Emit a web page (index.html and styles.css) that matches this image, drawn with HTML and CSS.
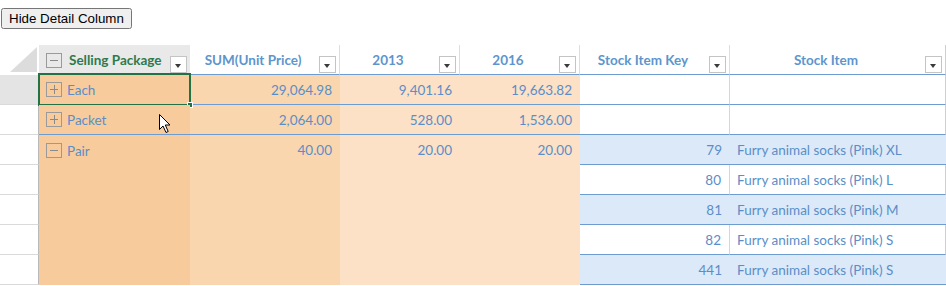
FILE: index.html
```html
<!DOCTYPE html>
<html>
<head>
<meta charset="utf-8">
<title>Pivot</title>
<link rel="stylesheet" href="styles.css">
</head>
<body>
<div class="toolbar"><button type="button" class="btn">Hide Detail Column</button></div>
<div class="pivot">
  <div class="corner"><svg class="tri" width="39" height="30" viewBox="0 0 39 30"><polygon points="10,27 37,2 37,27" fill="#dcdcdc"/></svg></div>
  <div class="hd hd-rows"><span class="tog minus"></span><span class="hd-label">Selling Package</span><span class="filter"></span></div>
  <div class="hd"><span class="hd-label">SUM(Unit Price)</span><span class="filter"></span></div>
  <div class="hd"><span class="hd-label">2013</span><span class="filter"></span></div>
  <div class="hd"><span class="hd-label">2016</span><span class="filter"></span></div>
  <div class="hd"><span class="hd-label">Stock Item Key</span><span class="filter"></span></div>
  <div class="hd hd-last"><span class="hd-label">Stock Item</span><span class="filter"></span></div>

  <div class="gut gut-sel"></div>
  <div class="c o1 lbl"><span class="tog plus"></span>Each<div class="selbox"><span class="handle"></span></div></div>
  <div class="c o2 num">29,064.98</div>
  <div class="c o3 num">9,401.16</div>
  <div class="c o3 num">19,663.82</div>
  <div class="c w num"></div>
  <div class="c w w-last"></div>

  <div class="gut"></div>
  <div class="c o1 lbl"><span class="tog plus"></span>Packet</div>
  <div class="c o2 num">2,064.00</div>
  <div class="c o3 num">528.00</div>
  <div class="c o3 num">1,536.00</div>
  <div class="c w num"></div>
  <div class="c w w-last"></div>

  <div class="gut"></div>
  <div class="c o1 lbl span5"><span class="tog minus"></span>Pair</div>
  <div class="c o2 num span5">40.00</div>
  <div class="c o3 num span5">20.00</div>
  <div class="c o3 num span5">20.00</div>
  <div class="c b num">79</div>
  <div class="c b txt">Furry animal socks (Pink) XL</div>

  <div class="gut"></div>
  <div class="c w num">80</div>
  <div class="c w w-last txt">Furry animal socks (Pink) L</div>

  <div class="gut"></div>
  <div class="c b num">81</div>
  <div class="c b txt">Furry animal socks (Pink) M</div>

  <div class="gut"></div>
  <div class="c w num">82</div>
  <div class="c w w-last txt">Furry animal socks (Pink) S</div>

  <div class="gut"></div>
  <div class="c b num">441</div>
  <div class="c b txt">Furry animal socks (Pink) S</div>

  <svg class="cursor" width="14" height="21" viewBox="0 0 14 21"><path d="M1.5 1.5 L1.5 16.5 L5 13 L8 19.5 L10.2 18.5 L7.3 12 L12 12 Z" fill="#ffffff" stroke="#000000" stroke-width="1" stroke-linejoin="miter"/></svg>
</div>
</body>
</html>
```

FILE: styles.css
```css
* { box-sizing: border-box; }
html, body { margin: 0; padding: 0; background: #ffffff; }
body { padding-top: 8px; font-family: "Lato", "Open Sans", sans-serif; }

.toolbar { display: flex; padding-left: 1px; height: 21px; }
.btn {
  font: 13.333px "Liberation Sans", Arial, sans-serif;
  height: 21px;
  padding: 1px 6px;
  color: #000;
}

.pivot {
  position: relative;
  margin-top: 16px;
  display: grid;
  grid-template-columns: 39px 151px 150px 120px 120px 150px 216px;
  grid-template-rows: repeat(8, 30px);
  font-size: 13.5px;
  color: #5b8ec8;
}

.corner { border-bottom: 1px solid #ffffff; }
.tri { display: block; }

.hd {
  display: flex;
  align-items: center;
  justify-content: center;
  position: relative;
  padding-right: 23px;
  padding-top: 1px;
  border-bottom: 1px solid #6d9dd0;
  border-right: 1px solid #dedede;
  font-weight: 700;
  color: #5d95cd;
  white-space: nowrap;
}
.hd-last { border-right: 1px solid #cfcfcf; }
.hd-rows {
  justify-content: flex-start;
  padding-left: 7px;
  background: #e9e9e9;
  color: #2d7a4e;
  border-right: none;
}
.hd-rows .hd-label { margin-left: 7px; }

.filter {
  position: absolute;
  right: 3px;
  top: 11px;
  width: 17px;
  height: 17px;
  background: #ffffff;
  border: 1px solid #c4c4c4;
}
.filter::after {
  content: "";
  position: absolute;
  left: 4px;
  top: 7px;
  border-left: 3.5px solid transparent;
  border-right: 3.5px solid transparent;
  border-top: 4px solid #3a3a3a;
}

.tog {
  position: relative;
  display: inline-block;
  flex: none;
  width: 16px;
  height: 15px;
  border: 1px solid #9a9a9a;
}
.tog::before {
  content: "";
  position: absolute;
  left: 3px;
  top: 6px;
  width: 8px;
  height: 1px;
  background: #8a8a8a;
}
.plus::after {
  content: "";
  position: absolute;
  left: 7px;
  top: 2px;
  width: 1px;
  height: 9px;
  background: #8a8a8a;
}

.gut {
  border-bottom: 1px solid #dadada;
  border-right: 1px solid #b9b9b9;
}
.gut-sel { background: #e4e4e4; }

.c {
  display: flex;
  align-items: center;
  border-bottom: 1px solid #6d9dd0;
  white-space: nowrap;
}
.o1 { background: #f8cb9c; }
.o2 { background: #fad6ae; }
.o3 { background: #fce1c6; }
.w { background: #ffffff; border-right: 1px solid #d6d6d6; }
.w-last { border-right: 1px solid #cfcfcf; }
.b { background: #dce9f8; }
.num { justify-content: flex-end; padding-right: 8px; }
.txt { padding-left: 7px; }
.lbl { padding-left: 7px; position: relative; }
.lbl .tog { margin-right: 5px; }
.span5 {
  grid-row: span 5;
  align-items: flex-start;
  padding-top: 7px;
  border-bottom: none;
  margin-bottom: -2px;
}
.lbl.span5 { padding-top: 8px; }

.selbox {
  position: absolute;
  left: -1px;
  top: -2px;
  right: -1px;
  bottom: -2px;
  border: 2px solid #217346;
}
.handle {
  position: absolute;
  right: -4px;
  bottom: -4px;
  width: 6px;
  height: 6px;
  background: #217346;
  border: 1px solid #ffffff;
}

.cursor {
  position: absolute;
  left: 158px;
  top: 68px;
}
```
